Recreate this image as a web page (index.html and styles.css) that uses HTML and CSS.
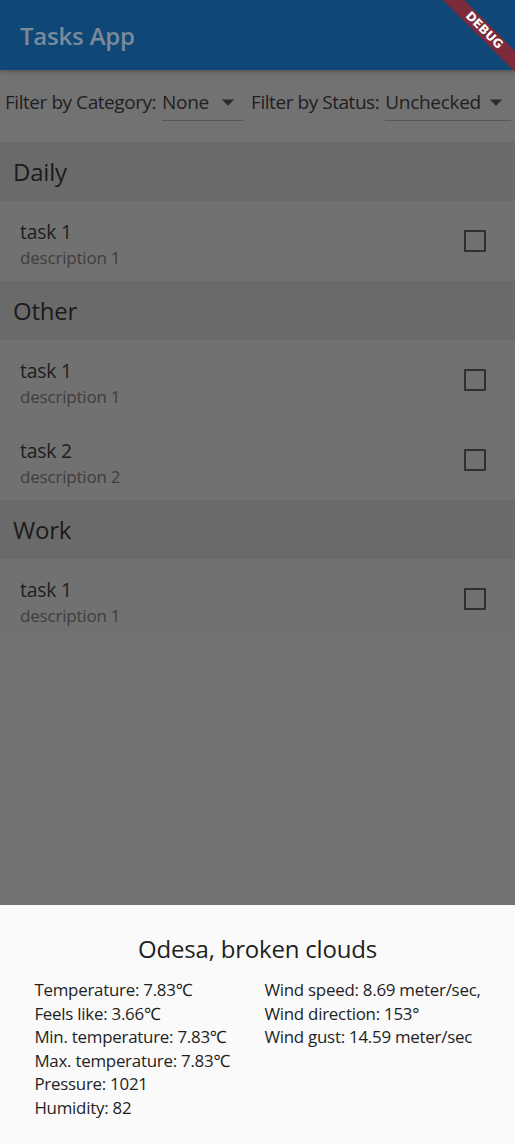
FILE: index.html
```html
<!DOCTYPE html>
<html lang="en">
<head>
<meta charset="utf-8">
<title>Tasks App</title>
<link rel="stylesheet" href="styles.css">
</head>
<body>
<div class="screen">
  <div class="app">
    <header class="appbar">
      <h1 class="appbar-title">Tasks App</h1>
    </header>
    <div class="filters">
      <span class="filter-label">Filter by Category:</span>
      <div class="dropdown dropdown-cat">
        <span class="dropdown-value">None</span>
        <svg class="dropdown-icon" viewBox="0 0 24 24" width="30" height="30"><path d="M7 10l5 5 5-5z"/></svg>
      </div>
      <span class="filter-label filter-label-2">Filter by Status:</span>
      <div class="dropdown">
        <span class="dropdown-value">Unchecked</span>
        <svg class="dropdown-icon" viewBox="0 0 24 24" width="30" height="30"><path d="M7 10l5 5 5-5z"/></svg>
      </div>
    </div>
    <main class="list">
      <section class="group">
        <div class="group-title">Daily</div>
        <div class="task">
          <div class="task-text">
            <div class="task-title">task 1</div>
            <div class="task-desc">description 1</div>
          </div>
          <span class="checkbox"></span>
        </div>
      </section>
      <section class="group">
        <div class="group-title">Other</div>
        <div class="task">
          <div class="task-text">
            <div class="task-title">task 1</div>
            <div class="task-desc">description 1</div>
          </div>
          <span class="checkbox"></span>
        </div>
        <div class="task">
          <div class="task-text">
            <div class="task-title">task 2</div>
            <div class="task-desc">description 2</div>
          </div>
          <span class="checkbox"></span>
        </div>
      </section>
      <section class="group">
        <div class="group-title">Work</div>
        <div class="task">
          <div class="task-text">
            <div class="task-title">task 1</div>
            <div class="task-desc">description 1</div>
          </div>
          <span class="checkbox"></span>
        </div>
      </section>
    </main>
  </div>
  <div class="sheet">
    <h2 class="sheet-title">Odesa, broken clouds</h2>
    <div class="sheet-cols">
      <div class="sheet-col">
        <div>Temperature: 7.83℃</div>
        <div>Feels like: 3.66℃</div>
        <div>Min. temperature: 7.83℃</div>
        <div>Max. temperature: 7.83℃</div>
        <div>Pressure: 1021</div>
        <div>Humidity: 82</div>
      </div>
      <div class="sheet-col">
        <div>Wind speed: 8.69 meter/sec,</div>
        <div>Wind direction: 153°</div>
        <div>Wind gust: 14.59 meter/sec</div>
      </div>
    </div>
  </div>
  <div class="debug-banner">DEBUG</div>
</div>
</body>
</html>
```

FILE: styles.css
```css
* { box-sizing: border-box; }

html, body {
  margin: 0;
  padding: 0;
}

body {
  font-family: "Open Sans", "Noto Sans", sans-serif;
  background: #727272;
  color: #1e1e1e;
}

.screen {
  position: relative;
  width: 515px;
  height: 1144px;
  display: flex;
  flex-direction: column;
  overflow: hidden;
}

.app {
  flex: 1;
  background: #727272;
  display: flex;
  flex-direction: column;
}

.appbar {
  height: 70px;
  background: #0f4876;
  display: flex;
  align-items: center;
  padding-left: 20px;
  box-shadow: 0 2px 4px rgba(0, 0, 0, 0.25);
  position: relative;
  z-index: 1;
}

.appbar-title {
  margin: 0;
  font-size: 24px;
  font-weight: 600;
  color: #7a8a9b;
  letter-spacing: -0.2px;
}

.filters {
  display: flex;
  align-items: flex-end;
  padding: 0 5px;
  margin-top: 12px;
  height: 39px;
}

.filter-label {
  font-size: 19px;
  line-height: 26px;
  color: #1f1f1f;
  padding-bottom: 6px;
  margin-right: 6px;
  letter-spacing: -0.45px;
  white-space: nowrap;
}

.filter-label-2 {
  margin-left: 8px;
}

.dropdown {
  display: flex;
  align-items: center;
  border-bottom: 1px solid #575757;
  padding-bottom: 3px;
}

.dropdown-value {
  font-size: 19px;
  line-height: 26px;
  color: #1f1f1f;
  letter-spacing: -0.3px;
  white-space: nowrap;
}

.dropdown-cat .dropdown-value {
  min-width: 51px;
}

.dropdown-icon {
  fill: #2b2b2b;
  flex: none;
}

.list {
  margin-top: 21px;
  display: flex;
  flex-direction: column;
}

.group-title {
  background: #6a6a6a;
  height: 59px;
  padding-left: 13px;
  display: flex;
  align-items: center;
  font-size: 24px;
  color: #1b1b1b;
  letter-spacing: -0.2px;
}

.task {
  height: 80px;
  background: #717171;
  display: flex;
  align-items: center;
  padding: 0 29px 0 20px;
}

.task-text {
  flex: 1;
  display: flex;
  flex-direction: column;
  padding-top: 5px;
}

.task-title {
  font-size: 19.3px;
  line-height: 27px;
  color: #1e1e1e;
  letter-spacing: -0.2px;
}

.task-desc {
  font-size: 17px;
  line-height: 25px;
  color: #3e3e3e;
  letter-spacing: -0.2px;
}

.checkbox {
  width: 22px;
  height: 22px;
  border: 2.5px solid #303030;
  border-radius: 1px;
  flex: none;
}

.sheet {
  background: #fafafa;
  height: 239px;
  padding: 27px 0 0;
  color: #1f1f1f;
}

.sheet-title {
  margin: 0;
  font-size: 24px;
  font-weight: 400;
  line-height: 33px;
  text-align: center;
  letter-spacing: -0.2px;
}

.sheet-cols {
  margin-top: 13px;
  display: flex;
  justify-content: space-evenly;
  align-items: flex-start;
}

.sheet-col {
  font-size: 16.9px;
  line-height: 23.6px;
  letter-spacing: -0.25px;
  white-space: nowrap;
}

.debug-banner {
  position: absolute;
  z-index: 2;
  top: 23px;
  left: 429px;
  width: 110px;
  height: 15px;
  transform: rotate(45deg);
  background: rgba(183, 28, 28, 0.65);
  color: #ffffff;
  font-family: "DejaVu Sans", sans-serif;
  font-weight: 700;
  font-size: 12px;
  line-height: 15px;
  text-align: center;
}
```
